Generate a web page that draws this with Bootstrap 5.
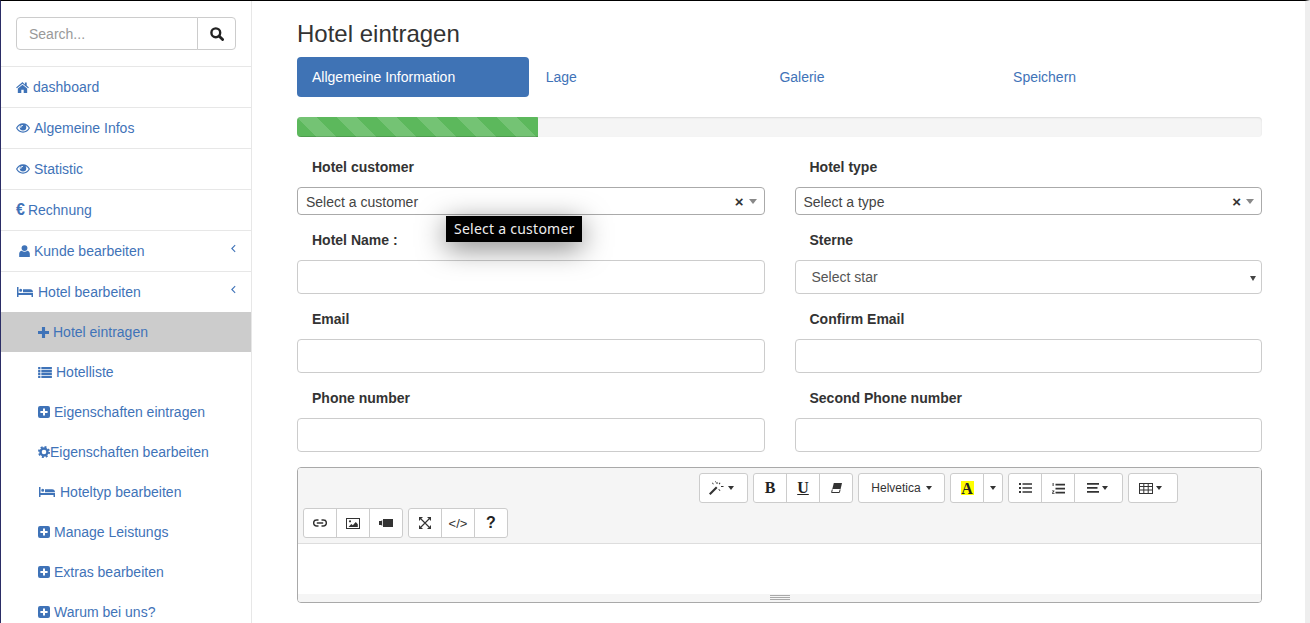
<!DOCTYPE html>
<html lang="en">
<head>
    <meta charset="UTF-8">
    <title>Hotel eintragen</title>
    <link href="https://cdn.jsdelivr.net/npm/bootstrap@5.3.3/dist/css/bootstrap.min.css" rel="stylesheet">
    <style>
        html, body { height: 100%; }
        body {
            font-family: "Liberation Sans", Arial, sans-serif;
            font-size: 14px;
            line-height: 20px;
            color: #333;
            border-top: 1px solid #000;
            border-left: 1px solid #2b2d66;
            border-right: 5px solid #eee;
            overflow: hidden;
        }
        a { color: #3f73b8; text-decoration: none; }
        svg { fill: currentColor; }

        .side-panel { width: 251px; flex: none; border-right: 1px solid #e7e7e7; }
        .side-search { padding: 16px 15px; height: 66px; border-bottom: 1px solid #e7e7e7; }
        .side-search .form-control, .side-search .btn { height: 33px; font-size: 14px; border-color: #ccc; }
        .side-search .form-control { padding: 6px 12px; border-radius: 4px 0 0 4px; }
        .side-search .form-control::placeholder { color: #999; }
        .side-search .btn { width: 39px; padding: 0; color: #222; border-radius: 0 4px 4px 0; }
        .side-link.list-group-item {
            display: flex; align-items: center; height: 41px; padding: 0 15px;
            color: #3f73b8; border-color: #e7e7e7; border-width: 0 0 1px; position: relative;
        }
        .side-link.side-open.list-group-item { height: 40px; border: 0; }
        .side-sub.list-group-item { height: 40px; padding: 0 0 0 37px; border: 0; }
        .side-sub.is-current { background: #ccc; }
        .side-link .ico { flex: none; }
        .side-arrow { position: absolute; right: 15px; top: 13px; }
        .euro-mark { font-size: 16px; margin-right: 3px; }
        .user-mark { margin: 0 4px 0 3px; }
        .bed-mark { margin: 0 5px 0 1px; }

        .main-pane { padding: 0 43px 0 45px; min-width: 0; }
        .page-title { font-size: 24px; line-height: 26px; font-weight: 400; margin: 20px 0 10px; color: #333; }
        .wizard-tabs { gap: 1.7px; height: 40px; margin-bottom: 20px; }
        .wizard-tabs a { width: 232px; padding: 0 15px; line-height: 40px; border-radius: 4px; }
        .wizard-tabs a.is-on { background: #3f73b5; color: #fff; }
        .wizard-bar.progress { height: 20px; background: #f5f5f5; border-radius: 4px; margin-bottom: 10px; box-shadow: inset 0 1px 2px rgba(0,0,0,.1); }
        .wizard-bar .progress-bar {
            width: 25%;
            background-color: #5cb85c;
            background-image: linear-gradient(45deg, rgba(255,255,255,.15) 25%, transparent 25%, transparent 50%, rgba(255,255,255,.15) 50%, rgba(255,255,255,.15) 75%, transparent 75%, transparent);
            background-size: 40px 40px;
            box-shadow: inset 0 -1px 0 rgba(0,0,0,.15);
        }

        .form-cols { --bs-gutter-x: 30px; --bs-gutter-y: 0; }
        .field-label { display: block; font-weight: 700; padding-left: 15px; margin-bottom: 0; color: #333; }
        .field-slot { position: relative; height: 79px; padding-top: 13px; }
        .field-slot .field-label { margin-bottom: 10px; }
        .field-slot .form-control, .field-slot .form-select { height: 34px; border-color: #ccc; border-radius: 4px; font-size: 14px; color: #555; }
        .field-slot.first { height: 70px; padding-top: 10px; }
        .field-slot.first .field-label { margin-bottom: 10px; }
        .field-slot .form-select {
            padding: 0 16px;
            background-image: linear-gradient(#fff, #fff);
            background-size: 0 0;
        }
        .select-arrow { position: absolute; right: 6px; bottom: 15px; border-style: solid; border-width: 5px 3px 0; border-color: #444 transparent transparent; }

        .combo-box {
            display: flex; align-items: center; height: 28px; padding: 1px 8px 0;
            border: 1px solid #aaa; border-radius: 4px; color: #444; background: #fff;
        }
        .combo-box .combo-clear { margin-left: auto; font-weight: 700; font-size: 15px; line-height: 1; margin-right: 5px; color: #333; }
        .combo-box .combo-arrow { border-style: solid; border-width: 5px 4px 0; border-color: #888 transparent transparent; margin-right: -1px; }
        .hint-tip {
            position: absolute; left: 149px; top: 69px; z-index: 5;
            width: 136px; height: 26px; padding: 3px 8px;
            background: #000; color: #eee;
            font-family: "Noto Sans", sans-serif; font-size: 14px; letter-spacing: .25px; line-height: 20px; white-space: nowrap;
            box-shadow: 0 6px 28px rgba(0,0,0,.5);
        }

        .note-box { border: 1px solid #a9a9a9; border-radius: 4px; margin-top: 13px; overflow: hidden; }
        .note-bar { background: #f5f5f5; height: 76px; padding: 5px; border-bottom: 1px solid #ddd; }
        .note-line { gap: 5px; height: 30px; margin-bottom: 5px; }
        .note-line.pushed { padding-left: 396px; }
        .note-bar .btn {
            height: 30px; width: 34px; padding: 0; font-size: 12px; line-height: 1;
            color: #333; background: #fff; border-color: #ccc;
            display: flex; align-items: center; justify-content: center; gap: 3px;
            --bs-btn-border-radius: 3px;
        }
        .note-bar .btn.w-wand { width: 49px; gap: 3px; padding-right: 5px; }
        .note-bar .btn.w-font { width: 87px; gap: 5px; }
        .note-bar .btn.w-mini { width: 20px; }
        .note-bar .btn.w-align { width: 49px; padding-right: 3px; }
        .note-bar .btn.w-table { width: 50px; padding-right: 6px; }
        .note-bar .btn.serif-b { font-family: "Liberation Serif", serif; font-weight: 700; font-size: 16px; color: #222; }
        .note-bar .btn.code-b { font-size: 13px; }
        .note-bar .btn.help-b { font-size: 16px; font-weight: 700; color: #222; }
        .tiny-caret { display: inline-block; border-style: solid; border-width: 4px 3.5px 0; border-color: #333 transparent transparent; }
        .color-a { background: #ff0; width: 13px; height: 14px; font-family: "Liberation Serif", serif; font-weight: 700; font-size: 16px; line-height: 15px; text-align: center; color: #222; }
        .note-text { height: 50px; background: #fff; }
        .note-grip { height: 8px; background: #f5f5f5; display: flex; justify-content: center; align-items: flex-start; padding-top: 1px; }
        .note-grip span { width: 20px; height: 5px; border-top: 1px solid #a9a9a9; border-bottom: 1px solid #a9a9a9; position: relative; }
        .note-grip span::after { content: ""; position: absolute; left: 0; right: 0; top: 1px; border-top: 1px solid #a9a9a9; }
    </style>
</head>
<body class="d-flex">
    <svg width="0" height="0" class="position-absolute">
        <defs>
            <symbol id="i-search" viewBox="0 0 14 14"><circle cx="5.8" cy="5.8" r="4.4" fill="none" stroke="currentColor" stroke-width="2.4"/><path d="M9 9l3.600 3.600" stroke="currentColor" stroke-width="2.800" stroke-linecap="round"/></symbol>
            <symbol id="i-home" viewBox="0 0 14 12"><path d="M7 0L0 5.900l.9 1L7 1.800l6.100 5.100.9-1-2.400-2V.6H9.600v2.100zM1.900 7.100V12h3.800V8.400h2.600V12h3.800V7.100L7 2.900z"/></symbol>
            <symbol id="i-eye" viewBox="0 0 15 10"><path fill-rule="evenodd" d="M7.500 0C4.200 0 1.700 2 0 5c1.700 3 4.200 5 7.500 5S13.300 8 15 5C13.300 2 10.800 0 7.500 0zM1.400 5c.9-1.400 2-2.500 3.400-3.200A3.800 3.800 0 0 0 4 4.100 3.500 3.500 0 0 0 11 4.100c0-.9-.3-1.700-.8-2.300C11.600 2.500 12.700 3.600 13.600 5 12.200 7.200 10.100 8.800 7.500 8.800S2.800 7.200 1.400 5zM6.900 1.700a.6.6 0 0 1 0 1.200c-.7 0-1.200.5-1.200 1.200a.6.6 0 0 1-1.200 0c0-1.300 1.100-2.400 2.400-2.400z"/></symbol>
            <symbol id="i-user" viewBox="0 0 12 13"><circle cx="6" cy="3.300" r="3.200"/><path d="M0.200 13V9.600C.2 7.700 1.400 6.300 3 6.100 3.800 6.800 4.800 7.200 6 7.200S8.200 6.800 9 6.100C10.600 6.300 11.800 7.700 11.800 9.600V13z"/></symbol>
            <symbol id="i-bed" viewBox="0 0 16 10"><path d="M0 0h1.500v6H16v4h-1.500V8h-13v2H0zM2.200 3.200a1.500 1.500 0 1 1 3 0 1.500 1.500 0 0 1-3 0zM6 2.200h7.200C14.800 2.200 16 3.300 16 5.300H6z"/></symbol>
            <symbol id="i-plus" viewBox="0 0 12 12"><path d="M4.300 0h3.400v4.300H12v3.400H7.700V12H4.300V7.700H0V4.300h4.300z"/></symbol>
            <symbol id="i-list" viewBox="0 0 15 12"><path d="M0 0h2.500v2.400H0zM3.500 0H15v2.400H3.500zM0 3.200h2.500v2.400H0zM3.500 3.200H15v2.400H3.500zM0 6.400h2.500v2.400H0zM3.500 6.400H15v2.400H3.500zM0 9.600h2.500V12H0zM3.500 9.600H15V12H3.500z"/></symbol>
            <symbol id="i-plusbox" viewBox="0 0 12 12"><path fill-rule="evenodd" d="M2 0h8a2 2 0 0 1 2 2v8a2 2 0 0 1-2 2H2a2 2 0 0 1-2-2V2a2 2 0 0 1 2-2zM5 2.400V5H2.400v2H5v2.600h2V7h2.600V5H7V2.400z"/></symbol>
            <symbol id="i-cog" viewBox="0 0 12 12"><circle cx="6" cy="6" r="3.500" fill="none" stroke="currentColor" stroke-width="2.400"/><circle cx="6" cy="6" r="5.100" fill="none" stroke="currentColor" stroke-width="1.800" stroke-dasharray="2 2"/></symbol>
            <symbol id="i-chev" viewBox="0 0 6 10"><path d="M5 1L1 5l4 4" fill="none" stroke="currentColor" stroke-width="1.300"/></symbol>
            <symbol id="i-wand" viewBox="0 0 16 14"><path d="M0 12.500L7 5.500l1.500 1.500-7 7z"/><path d="M7.500 1h1v2h-1zM10.500 1.500l1 .5-1 1.500-.8-.5zM12 5h2.500v1H12zM3.500 1.500l1.300 1.500-.7.500L3 2zM10 8l1.500 1.500-.7.600L9.300 8.600zM6 .2h.8v1H6z"/></symbol>
            <symbol id="i-eraser" viewBox="0 0 11 10"><path d="M2.800 0H11L9.600 6H1.300z"/><path d="M1.300 6.500L.6 9.500h7.800L9.100 6.500" fill="none" stroke="currentColor"/></symbol>
            <symbol id="i-ul" viewBox="0 0 13 10"><path d="M0 0h2v2H0zM3.500 .2H13v1.600H3.500zM0 4h2v2H0zM3.500 4.200H13v1.600H3.500zM0 8h2v2H0zM3.500 8.200H13v1.600H3.500z"/></symbol>
            <symbol id="i-ol" viewBox="0 0 13 11"><path d="M.6 0h1v3H.6zM3.500 .8H13v1.600H3.500zM3.500 4.800H13v1.600H3.500zM3.500 8.800H13v1.600H3.500zM0 7.500h2.400v.8L1 10h1.500v.8H0v-.8l1.400-1.700H0z"/></symbol>
            <symbol id="i-align" viewBox="0 0 12 10"><path d="M0 0h12v1.800H0zM0 4h10.500v1.800H0zM0 8h12v1.800H0z"/></symbol>
            <symbol id="i-table" viewBox="0 0 14 11"><path fill-rule="evenodd" d="M0 0h14v11H0zM1 1v2h3.300V1zM5.300 1v2h3.400V1zM9.700 1v2H13V1zM1 4v2.500h3.300V4zM5.300 4v2.500h3.400V4zM9.700 4v2.500H13V4zM1 7.500V10h3.300V7.500zM5.300 7.500V10h3.400V7.500zM9.700 7.500V10H13V7.500z"/></symbol>
            <symbol id="i-link" viewBox="0 0 14 8"><path d="M5.500 1H3.600a3 3 0 0 0 0 6h1.900M8.500 1h1.900a3 3 0 0 1 0 6H8.500M3.800 4h6.400" fill="none" stroke="currentColor" stroke-width="1.500"/></symbol>
            <symbol id="i-pic" viewBox="0 0 14 11"><path fill-rule="evenodd" d="M0 0h14v11H0zM1 1v9h12V1z"/><path d="M2.500 9l2.800-3 1.500 1.200L9.800 4 11.800 6.200V9z"/><circle cx="4" cy="3.300" r="1.100"/></symbol>
            <symbol id="i-video" viewBox="0 0 14 8"><path d="M4 0h10v8H4zM0 2h2.200L3.200 1v6L2.200 6H0z"/></symbol>
            <symbol id="i-expand" viewBox="0 0 12 12"><path d="M2 2l8 8M10 2l-8 8" stroke="currentColor" stroke-width="1.100" fill="none"/><path d="M0 0h4L0 4zM12 0H8l4 4zM0 12h4l-4-4zM12 12H8l4-4z"/></symbol>
        </defs>
    </svg>

    <aside class="side-panel">
        <div class="side-search">
            <div class="input-group flex-nowrap">
                <input class="form-control" type="text" placeholder="Search...">
                <button class="btn btn-light bg-white" type="button" aria-label="Search"><svg class="ico" width="14" height="14"><use href="#i-search"/></svg></button>
            </div>
        </div>
        <div class="list-group list-group-flush">
            <a class="list-group-item side-link" href="#"><svg class="ico me-1" width="13" height="11"><use href="#i-home"/></svg>dashboard</a>
            <a class="list-group-item side-link" href="#"><svg class="ico me-1" width="14" height="10"><use href="#i-eye"/></svg>Algemeine Infos</a>
            <a class="list-group-item side-link" href="#"><svg class="ico me-1" width="14" height="10"><use href="#i-eye"/></svg>Statistic</a>
            <a class="list-group-item side-link" href="#"><b class="euro-mark">€</b>Rechnung</a>
            <a class="list-group-item side-link" href="#"><svg class="ico user-mark" width="11" height="12"><use href="#i-user"/></svg>Kunde bearbeiten<svg class="side-arrow" width="5" height="9"><use href="#i-chev"/></svg></a>
            <a class="list-group-item side-link side-open" href="#"><svg class="ico bed-mark" width="16" height="10"><use href="#i-bed"/></svg>Hotel bearbeiten<svg class="side-arrow" width="5" height="9"><use href="#i-chev"/></svg></a>
            <a class="list-group-item side-link side-sub is-current" href="#"><svg class="ico me-1" width="11" height="11"><use href="#i-plus"/></svg>Hotel eintragen</a>
            <a class="list-group-item side-link side-sub" href="#"><svg class="ico me-1" width="14" height="11"><use href="#i-list"/></svg>Hotelliste</a>
            <a class="list-group-item side-link side-sub" href="#"><svg class="ico me-1" width="12" height="12"><use href="#i-plusbox"/></svg>Eigenschaften eintragen</a>
            <a class="list-group-item side-link side-sub" href="#"><svg class="ico" width="12" height="12"><use href="#i-cog"/></svg>Eigenschaften bearbeiten</a>
            <a class="list-group-item side-link side-sub" href="#"><svg class="ico bed-mark" width="16" height="10"><use href="#i-bed"/></svg>Hoteltyp bearbeiten</a>
            <a class="list-group-item side-link side-sub" href="#"><svg class="ico me-1" width="12" height="12"><use href="#i-plusbox"/></svg>Manage Leistungs</a>
            <a class="list-group-item side-link side-sub" href="#"><svg class="ico me-1" width="12" height="12"><use href="#i-plusbox"/></svg>Extras bearbeiten</a>
            <a class="list-group-item side-link side-sub" href="#"><svg class="ico me-1" width="12" height="12"><use href="#i-plusbox"/></svg>Warum bei uns?</a>
        </div>
    </aside>

    <main class="main-pane flex-grow-1">
        <h1 class="page-title">Hotel eintragen</h1>
        <nav class="wizard-tabs d-flex">
            <a class="is-on" href="#">Allgemeine Information</a>
            <a href="#">Lage</a>
            <a href="#">Galerie</a>
            <a href="#">Speichern</a>
        </nav>
        <div class="progress wizard-bar"><div class="progress-bar"></div></div>

        <div class="row form-cols">
            <div class="col-6">
                <div class="field-slot first">
                    <label class="field-label">Hotel customer</label>
                    <div class="combo-box">Select a customer<span class="combo-clear">×</span><span class="combo-arrow"></span></div>
                    <div class="hint-tip">Select a customer</div>
                </div>
            </div>
            <div class="col-6">
                <div class="field-slot first">
                    <label class="field-label">Hotel type</label>
                    <div class="combo-box">Select a type<span class="combo-clear">×</span><span class="combo-arrow"></span></div>
                </div>
            </div>
            <div class="col-6">
                <div class="field-slot"><label class="field-label">Hotel Name :</label><input class="form-control" type="text"></div>
            </div>
            <div class="col-6">
                <div class="field-slot"><label class="field-label">Sterne</label><select class="form-select"><option>Select star</option></select><span class="select-arrow"></span></div>
            </div>
            <div class="col-6">
                <div class="field-slot"><label class="field-label">Email</label><input class="form-control" type="text"></div>
            </div>
            <div class="col-6">
                <div class="field-slot"><label class="field-label">Confirm Email</label><input class="form-control" type="text"></div>
            </div>
            <div class="col-6">
                <div class="field-slot"><label class="field-label">Phone number</label><input class="form-control" type="text"></div>
            </div>
            <div class="col-6">
                <div class="field-slot"><label class="field-label">Second Phone number</label><input class="form-control" type="text"></div>
            </div>
        </div>

        <div class="note-box">
            <div class="note-bar">
                <div class="note-line pushed d-flex">
                    <button class="btn w-wand" type="button" aria-label="Style"><svg width="16" height="14"><use href="#i-wand"/></svg><span class="tiny-caret"></span></button>
                    <div class="btn-group">
                        <button class="btn serif-b" type="button">B</button>
                        <button class="btn serif-b text-decoration-underline" type="button">U</button>
                        <button class="btn" type="button" aria-label="Clear"><svg width="11" height="10"><use href="#i-eraser"/></svg></button>
                    </div>
                    <button class="btn w-font" type="button">Helvetica <span class="tiny-caret"></span></button>
                    <div class="btn-group">
                        <button class="btn" type="button"><span class="color-a">A</span></button>
                        <button class="btn w-mini" type="button" aria-label="Colors"><span class="tiny-caret"></span></button>
                    </div>
                    <div class="btn-group">
                        <button class="btn" type="button" aria-label="Bullets"><svg width="13" height="10"><use href="#i-ul"/></svg></button>
                        <button class="btn" type="button" aria-label="Numbers"><svg width="13" height="11"><use href="#i-ol"/></svg></button>
                        <button class="btn w-align" type="button" aria-label="Align"><svg width="12" height="10"><use href="#i-align"/></svg><span class="tiny-caret"></span></button>
                    </div>
                    <button class="btn w-table" type="button" aria-label="Table"><svg width="14" height="11"><use href="#i-table"/></svg><span class="tiny-caret"></span></button>
                </div>
                <div class="note-line d-flex">
                    <div class="btn-group">
                        <button class="btn" type="button" aria-label="Link"><svg width="14" height="8"><use href="#i-link"/></svg></button>
                        <button class="btn" type="button" aria-label="Picture"><svg width="14" height="11"><use href="#i-pic"/></svg></button>
                        <button class="btn" type="button" aria-label="Video"><svg width="14" height="8"><use href="#i-video"/></svg></button>
                    </div>
                    <div class="btn-group">
                        <button class="btn" type="button" aria-label="Fullscreen"><svg width="12" height="12"><use href="#i-expand"/></svg></button>
                        <button class="btn code-b" type="button">&lt;/&gt;</button>
                        <button class="btn help-b" type="button">?</button>
                    </div>
                </div>
            </div>
            <div class="note-text"></div>
            <div class="note-grip"><span></span></div>
        </div>
    </main>
    <script src="https://cdn.jsdelivr.net/npm/bootstrap@5.3.3/dist/js/bootstrap.bundle.min.js"></script>
</body>
</html>
